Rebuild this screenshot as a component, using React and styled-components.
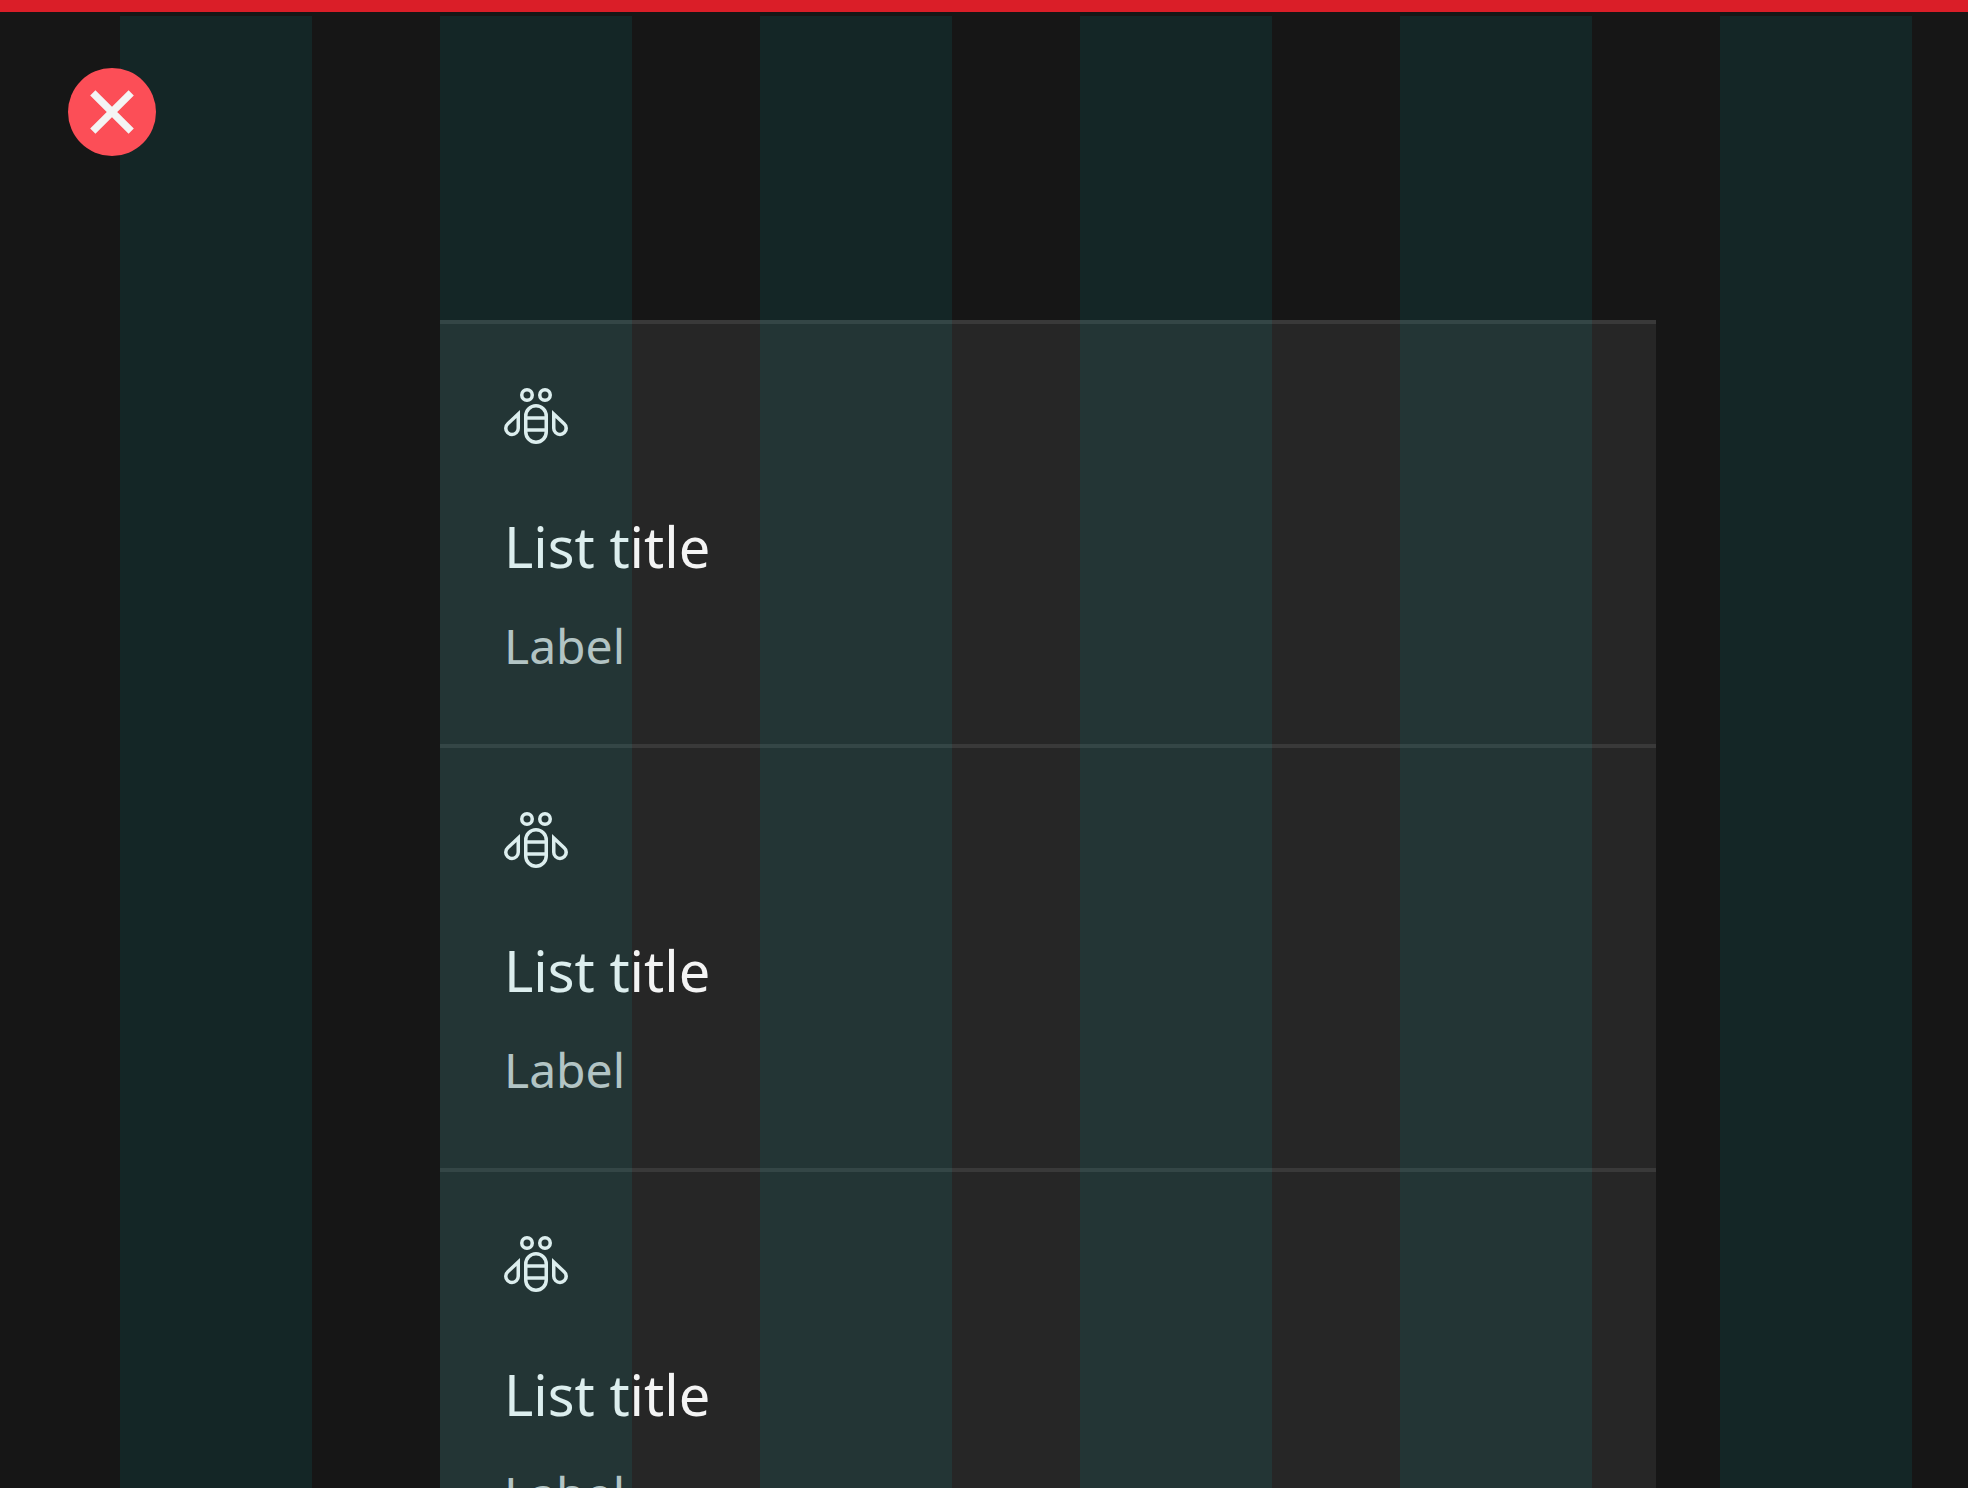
import React from "react";
import styled, { createGlobalStyle, css } from "styled-components";

const GlobalStyle = createGlobalStyle`
  *, *::before, *::after { box-sizing: border-box; }
  body {
    margin: 0;
    background: #161616;
    color: #f4f4f4;
    font-family: "Noto Sans", "Open Sans", sans-serif;
  }
`;

const columnGrid = css`
  display: grid;
  grid-template-columns: repeat(6, minmax(0, 1fr));
  column-gap: 128px;
  padding: 0 56px 0 120px;
`;

const Page = styled.div`
  position: relative;
  height: 100vh;
  overflow: hidden;
  border-top: 12px solid #da1e28;
`;

const Header = styled.header`
  padding: 56px 68px 164px;
`;

const Marker = styled.svg`
  position: relative;
  z-index: 2;
  display: block;
  width: 88px;
  height: 88px;
`;

const Content = styled.main`
  ${columnGrid}
`;

const List = styled.ul`
  grid-column: 2 / 6;
  margin: 0 -64px 0 0;
  padding: 0;
  list-style: none;
  background: #262626;
`;

const Item = styled.li`
  padding: 60px 64px 64px;
  border-top: 4px solid #393939;
`;

const Icon = styled.svg`
  display: block;
  width: 64px;
  height: 64px;
  margin-bottom: 64px;
  fill: currentColor;
`;

const Title = styled.h2`
  margin: 0 0 32px;
  font-size: 56px;
  font-weight: 400;
  line-height: 68px;
`;

const Label = styled.p`
  margin: 0;
  color: #c6c6c6;
  font-size: 48px;
  line-height: 68px;
`;

const GridOverlay = styled.div`
  ${columnGrid}
  position: absolute;
  inset: 4px 0 0;
  z-index: 1;
  pointer-events: none;
`;

const Column = styled.div`
  background: rgba(8, 189, 186, 0.1);
`;

function Bee() {
  return (
    <Icon viewBox="0 0 32 32" aria-hidden="true">
      <path d="M16,10a6,6,0,0,0-6,6v8a6,6,0,0,0,12,0V16A6,6,0,0,0,16,10Zm-4.25,7.87h8.5v4.25h-8.5ZM16,28.25A4.27,4.27,0,0,1,11.75,24v-.13h8.5V24A4.27,4.27,0,0,1,16,28.25Zm4.25-12.13h-8.5V16a4.25,4.25,0,0,1,8.5,0Z" />
      <path d="M30.66,19.21,24,13v9.1a4,4,0,0,0,8,0A3.83,3.83,0,0,0,30.66,19.21ZM28,24.35a2.25,2.25,0,0,1-2.25-2.25V17l3.72,3.47h0A2.05,2.05,0,0,1,30.2,22,2.25,2.25,0,0,1,28,24.35Z" />
      <path d="M0,22.1a4,4,0,0,0,8,0V13L1.34,19.21A3.88,3.88,0,0,0,0,22.1Zm2.48-1.56h0L6.25,17v5.1a2.25,2.25,0,0,1-4.5,0A2.05,2.05,0,0,1,2.48,20.54Z" />
      <path d="M15,5.5A3.5,3.5,0,1,0,11.5,9,3.5,3.5,0,0,0,15,5.5Zm-5.25,0A1.75,1.75,0,1,1,11.5,7.25,1.77,1.77,0,0,1,9.75,5.5Z" />
      <path d="M20.5,2A3.5,3.5,0,1,0,24,5.5,3.5,3.5,0,0,0,20.5,2Zm0,5.25A1.75,1.75,0,1,1,22.25,5.5,1.77,1.77,0,0,1,20.5,7.25Z" />
    </Icon>
  );
}

const items = [1, 2, 3].map((id) => ({ id, title: "List title", label: "Label" }));

export default function App() {
  return (
    <>
      <GlobalStyle />
      <Page>
        <Header>
          <Marker viewBox="0 0 88 88" role="img" aria-label="Incorrect usage">
            <circle cx="44" cy="44" r="44" fill="#fc4e57" />
            <path d="M24.8 24.8 63.2 63.2M63.2 24.8 24.8 63.2" stroke="#f4f4f4" strokeWidth="7.4" fill="none" />
          </Marker>
        </Header>
        <Content>
          <List>
            {items.map((item) => (
              <Item key={item.id}>
                <Bee />
                <Title>{item.title}</Title>
                <Label>{item.label}</Label>
              </Item>
            ))}
          </List>
        </Content>
        <GridOverlay aria-hidden="true">
          {[1, 2, 3, 4, 5, 6].map((n) => (
            <Column key={n} />
          ))}
        </GridOverlay>
      </Page>
    </>
  );
}
